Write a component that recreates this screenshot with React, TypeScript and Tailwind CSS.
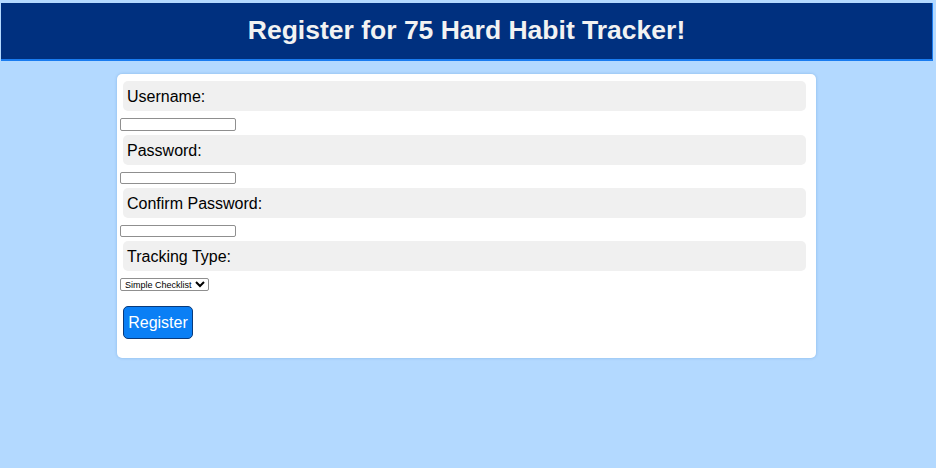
import * as React from "react";

const font = { fontFamily: '"Liberation Sans", Arial, sans-serif' };

function FieldLabel({ children }: { children: React.ReactNode }) {
  return (
    <div className="ml-[3px] mt-[4px] flex h-[30px] w-[683px] items-center rounded-[5px] bg-[#f0f0f0] pl-[4px] pt-[1px] text-[16px] text-black">
      {children}
    </div>
  );
}

function TextBox({ type = "text", first = false }: { type?: string; first?: boolean }) {
  return (
    <input
      type={type}
      className={
        first
          ? "mt-[7px] block h-[13px] w-[116px] rounded-[2px] border border-[#8f8f8f] bg-white"
          : "mt-[7px] block h-[12px] w-[116px] rounded-[2px] border border-[#8f8f8f] bg-white"
      }
    />
  );
}

export default function App() {
  return (
    <div className="min-h-[468px] w-full bg-[#b3d9ff] pt-[3px]" style={font}>
      {/* Header */}
      <div className="ml-[1px] flex h-[58px] w-[932px] items-center justify-center border-b-2 border-r border-[#1a7cf0] bg-[#00307f]">
        <h1 className="text-[26.5px] font-bold text-[#f2f2f2]">Register for 75 Hard Habit Tracker!</h1>
      </div>

      {/* Form card */}
      <div className="ml-[117px] mt-[13px] h-[284px] w-[699px] rounded-[5px] bg-white pl-[3px] pt-[3px] shadow-[0_0_3px_rgba(0,80,160,0.25)]">
        <FieldLabel>Username:</FieldLabel>
        <TextBox first />
        <FieldLabel>Password:</FieldLabel>
        <TextBox type="password" />
        <FieldLabel>Confirm Password:</FieldLabel>
        <TextBox type="password" />
        <FieldLabel>Tracking Type:</FieldLabel>
        <select className="mt-[7px] block h-[13px] w-[89px] rounded-[2px] border border-[#8f8f8f] bg-white px-0 text-[9px] leading-none text-black">
          <option>Simple Checklist</option>
          <option>Detailed Log</option>
        </select>
        <button className="ml-[3px] mt-[15px] flex h-[33px] w-[70px] items-center justify-center rounded-[5px] border border-[#0a3a7a] bg-[#0a7ff5] text-[16px] text-white">
          Register
        </button>
      </div>
    </div>
  );
}
